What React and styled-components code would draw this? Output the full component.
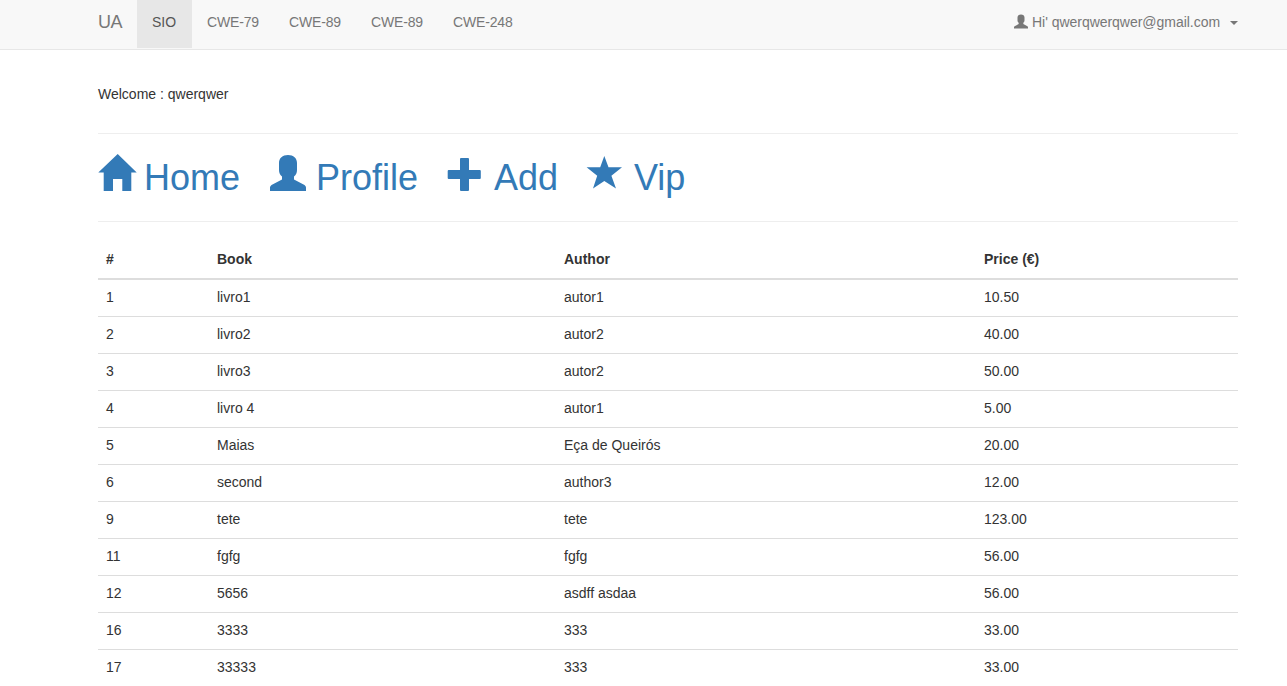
import React from 'react';
import styled, { createGlobalStyle } from 'styled-components';

const GlobalStyle = createGlobalStyle`
  * { box-sizing: border-box; }
  body {
    margin: 0;
    height: 686px;
    overflow: hidden;
    background: #fff;
    color: #333;
    font: 14px/20px "Nimbus Sans", "Liberation Sans", Arial, sans-serif;
  }
  #root { height: 100%; overflow: hidden; }
`;

const Navbar = styled.nav`
  height: 50px;
  background: #f8f8f8;
  border-bottom: 1px solid #e7e7e7;
`;

const Container = styled.div`
  width: 1140px;
  margin-left: 98px;
`;

const NavRow = styled(Container)`
  display: flex;
  height: 48px;
  line-height: 20px;
  color: #777;
`;

const Brand = styled.a`
  width: 39px;
  padding-top: 12px;
  font-size: 18px;
  letter-spacing: -0.4px;
`;

const NavLink = styled.a`
  width: ${(p) => p.$width}px;
  padding: 12px 0 0 15px;
  white-space: nowrap;
  letter-spacing: ${(p) => (p.$active ? '0' : '-0.15px')};
  color: ${(p) => (p.$active ? '#555' : '#777')};
  background: ${(p) => (p.$active ? '#e7e7e7' : 'transparent')};
`;

const UserMenu = styled.a`
  display: flex;
  width: 224px;
  margin-left: auto;
  padding-top: 12px;
  white-space: nowrap;
  letter-spacing: -0.03px;
`;

const UserIcon = styled.svg`
  width: 14px;
  height: 15px;
  margin: 2px 4px 0 0;
  fill: currentColor;
`;

const Caret = styled.span`
  margin: 9px 0 0 auto;
  height: 4px;
  border-top: 4px solid #777;
  border-left: 4px solid transparent;
  border-right: 4px solid transparent;
`;

const Welcome = styled.p`
  margin: 34px 0 29px;
`;

const Rule = styled.hr`
  height: 1px;
  margin: 0;
  border: 0;
  background: #eee;
`;

const Actions = styled.div`
  display: flex;
  gap: 30px;
  height: 87px;
  padding-top: 20px;
`;

const Action = styled.a`
  display: flex;
  gap: 10px;
  color: #337ab7;
  font-size: 36px;
  line-height: 40px;
  padding-top: 4px;
  width: ${(p) => p.$width}px;
`;

const ActionIcon = styled.svg`
  flex: none;
  width: 36px;
  height: 38px;
  margin-top: -4px;
  overflow: visible;
  fill: currentColor;
`;

const Table = styled.table`
  width: 100%;
  margin-top: 20px;
  table-layout: fixed;
  border-spacing: 0;
`;

const Column = styled.col`
  width: ${(p) => p.$width}px;
`;

const HeadCell = styled.th`
  height: 38px;
  padding: 7px 8px 9px;
  border-bottom: 2px solid #ddd;
  text-align: left;
`;

const Cell = styled.td`
  height: 37px;
  padding: 7px 8px 9px;
  border-bottom: 1px solid #ddd;
`;

const personPath =
  'M18 1C12.5 1 9 4 9 9V16C9 19 10 21 12 22.5V25.5L1.5 31Q0 32 0 33.5V37H36V33.5Q36 32 34.5 31L24 25.5V22.5C26 21 27 19 27 16V9C27 4 23.5 1 18 1Z';

const links = [
  { label: 'SIO', width: 55, active: true },
  { label: 'CWE-79', width: 82 },
  { label: 'CWE-89', width: 82 },
  { label: 'CWE-89', width: 82 },
  { label: 'CWE-248', width: 90 },
];

const actions = [
  { label: 'Home', width: 142, path: 'M19.7 0L38.7 18.6H33.3V37H24.3V25H15V37H5.7V18.6H.3Z' },
  { label: 'Profile', width: 148, path: personPath },
  {
    label: 'Add',
    width: 110,
    path: 'M13 4H20Q21 4 21 5V16H31.8Q32.8 16 32.8 17V24Q32.8 25 31.8 25H21V36Q21 37 20 37H13Q12 37 12 36V25H.7Q-.3 25-.3 24V17Q-.3 16 .7 16H12V5Q12 4 13 4Z',
  },
  { label: 'Vip', width: 100, path: 'M16.3 2L20.5 13.2H34L23.4 21.8L28 34.5L16.3 27L5 34.5L9.2 21.8L-1.4 13.2H12.2Z' },
];

const books = [
  ['1', 'livro1', 'autor1', '10.50'],
  ['2', 'livro2', 'autor2', '40.00'],
  ['3', 'livro3', 'autor2', '50.00'],
  ['4', 'livro 4', 'autor1', '5.00'],
  ['5', 'Maias', 'Eça de Queirós', '20.00'],
  ['6', 'second', 'author3', '12.00'],
  ['9', 'tete', 'tete', '123.00'],
  ['11', 'fgfg', 'fgfg', '56.00'],
  ['12', '5656', 'asdff asdaa', '56.00'],
  ['16', '3333', '333', '33.00'],
  ['17', '33333', '333', '33.00'],
];

export default function App() {
  return (
    <>
      <GlobalStyle />
      <Navbar>
        <NavRow>
          <Brand>UA</Brand>
          {links.map((l, i) => (
            <NavLink key={i} $width={l.width} $active={l.active}>{l.label}</NavLink>
          ))}
          <UserMenu>
            <UserIcon viewBox="0 0 36 38"><path d={personPath} /></UserIcon>
            Hi' qwerqwerqwer@gmail.com
            <Caret />
          </UserMenu>
        </NavRow>
      </Navbar>
      <Container>
        <Welcome>Welcome : qwerqwer</Welcome>
        <Rule />
        <Actions>
          {actions.map((a) => (
            <Action key={a.label} $width={a.width}>
              <ActionIcon viewBox="0 0 36 38"><path d={a.path} /></ActionIcon>
              {a.label}
            </Action>
          ))}
        </Actions>
        <Rule />
        <Table>
          <colgroup>
            <Column $width={111} />
            <Column $width={347} />
            <Column $width={420} />
            <Column $width={262} />
          </colgroup>
          <thead>
            <tr>
              {['#', 'Book', 'Author', 'Price (€)'].map((h) => <HeadCell key={h}>{h}</HeadCell>)}
            </tr>
          </thead>
          <tbody>
            {books.map((row) => (
              <tr key={row[0]}>
                {row.map((value, i) => <Cell key={i}>{value}</Cell>)}
              </tr>
            ))}
          </tbody>
        </Table>
      </Container>
    </>
  );
}
